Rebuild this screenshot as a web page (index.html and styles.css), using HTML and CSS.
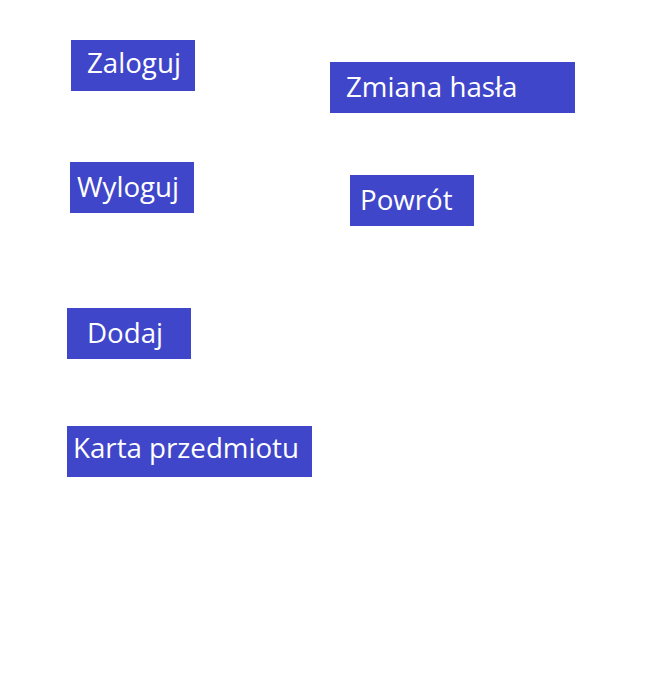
FILE: index.html
```html
<!DOCTYPE html>
<html lang="pl">
<head>
<meta charset="utf-8">
<title>Menu</title>
<link rel="stylesheet" href="styles.css">
</head>
<body>
<div class="canvas">
  <div class="col col-left">
    <button class="btn btn-zaloguj">Zaloguj</button>
    <button class="btn btn-wyloguj">Wyloguj</button>
    <button class="btn btn-dodaj">Dodaj</button>
    <button class="btn btn-wide btn-karta">Karta przedmiotu</button>
  </div>
  <div class="col col-right">
    <button class="btn btn-wide btn-zmiana">Zmiana hasła</button>
    <button class="btn btn-powrot">Powrót</button>
  </div>
</div>
</body>
</html>
```
FILE: styles.css
```css
html, body {
  margin: 0;
  padding: 0;
  background: #ffffff;
}
.canvas {
  display: flex;
  width: 669px;
  height: 675px;
}
.col {
  display: flex;
  flex-direction: column;
  align-items: flex-start;
}
.col-left {
  width: 312px;
}
.col-right {
  margin-left: 18px;
}
.btn {
  box-sizing: border-box;
  width: 124px;
  height: 51px;
  border: 0;
  margin: 0;
  background: #3f46c9;
  color: #ffffff;
  font-family: "Open Sans", sans-serif;
  font-size: 27.7px;
  line-height: 38px;
  text-align: left;
  white-space: nowrap;
  padding: 0 0 3px 0;
}
.btn-wide {
  width: 245px;
}
.btn-zaloguj { margin: 40px 0 0 71px; padding-left: 16px; padding-bottom: 7px; }
.btn-wyloguj { margin: 71px 0 0 70px; padding-left: 7px; }
.btn-dodaj { margin: 95px 0 0 67px; padding-left: 20px; }
.btn-karta { margin: 67px 0 0 67px; padding-left: 6px; padding-bottom: 9px; }
.btn-zmiana { margin: 62px 0 0 0; padding-left: 16px; }
.btn-powrot { margin: 62px 0 0 20px; padding-left: 10px; }
```
